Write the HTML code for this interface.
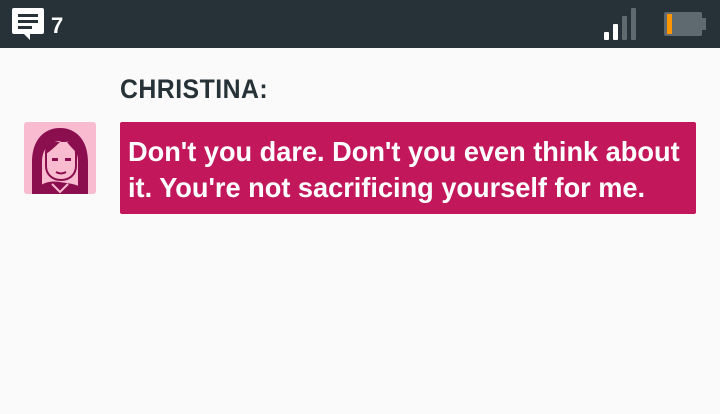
<!DOCTYPE html>
<html><head><style>
body{margin:0;width:720px;height:414px;background:#fafafa;font-family:"Liberation Sans",sans-serif;position:relative;overflow:hidden}
.bar{position:absolute;left:0;top:0;width:720px;height:48px;background:#263238}
.name{position:absolute;left:120px;top:74px;font-size:27px;font-weight:bold;color:#263238;letter-spacing:0.5px;transform:scaleX(0.92);transform-origin:left}
.bub{position:absolute;left:120px;top:122px;width:576px;height:92px;background:#c2185b;border-radius:2px}
.txt{position:absolute;left:128px;top:134px;color:#fff;font-size:28px;font-weight:bold;line-height:36px;white-space:nowrap;transform:scaleX(0.97);transform-origin:left}
.av{position:absolute;left:24px;top:122px;width:72px;height:72px;background:#f8bbd0;border-radius:3px;overflow:hidden}
</style></head><body>
<div class="bar">
<svg style="position:absolute;left:0;top:0" width="720" height="48">
<path d="M14 8h28a2 2 0 0 1 2 2v22a2 2 0 0 1-2 2h-10l-2 -0v6l-6-6h-10a2 2 0 0 1-2-2v-22a2 2 0 0 1 2-2z" fill="#fff"/>
<rect x="18" y="14" width="20" height="3" fill="#263238"/>
<rect x="18" y="20" width="20" height="3" fill="#263238"/>
<rect x="18" y="26" width="14" height="3" fill="#263238"/>
<text x="51" y="33" font-family="Liberation Sans" font-weight="bold" font-size="22" fill="#fff">7</text>
<rect x="604" y="32" width="5" height="8" rx="1" fill="#fff"/>
<rect x="613" y="24" width="5" height="16" rx="1" fill="#fff"/>
<rect x="622" y="16" width="5" height="24" rx="1" fill="#5f6a70"/>
<rect x="631" y="8" width="5" height="32" rx="1" fill="#5f6a70"/>
<rect x="664" y="12" width="38" height="24" rx="2" fill="#5f6a70"/>
<rect x="702" y="18" width="4" height="12" fill="#5f6a70"/>
<rect x="667" y="14" width="5" height="20" fill="#ff9800"/>
</svg>
</div>
<div class="name">CHRISTINA:</div>
<div class="av"><svg width="72" height="72">
<path d="M8 72V40C8 18 20 6 36 6S64 18 64 40V72H54V40C54 28 48 20 36 20S18 28 18 40V72Z" fill="#8b0f4f"/>
<path d="M22 30C22 22 28 18 38 18S52 22 52 32V44C52 52 46 58 37 58S22 52 22 44Z" fill="#f8bbd0" stroke="#8b0f4f" stroke-width="2"/>
<path d="M22 32C28 28 34 22 40 16C44 22 48 26 52 30V20H22Z" fill="#8b0f4f"/>
<rect x="28" y="36" width="6" height="3" fill="#8b0f4f"/><rect x="41" y="36" width="6" height="3" fill="#8b0f4f"/>
<path d="M32 50Q37 53 42 50" stroke="#8b0f4f" stroke-width="2" fill="none"/>
<path d="M10 72C14 62 24 58 36 60S58 62 62 72Z" fill="#8b0f4f"/>
<path d="M28 62L36 70L44 62" stroke="#f8bbd0" stroke-width="2" fill="none"/>
</svg></div>
<div class="bub"></div>
<div class="txt">Don't you dare. Don't you even think about<br>it. You're not sacrificing yourself for me.</div>
</body></html>
